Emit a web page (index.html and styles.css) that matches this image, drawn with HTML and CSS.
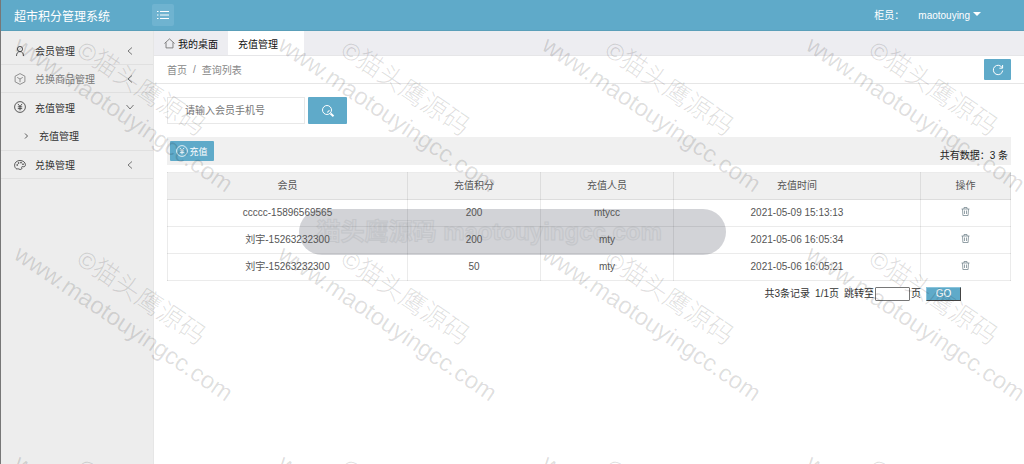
FILE: index.html
```html
<!DOCTYPE html>
<html lang="zh-CN">

<head>
    <meta charset="UTF-8">
    <meta name="viewport" content="width=device-width, initial-scale=1.0">
    <title>超市积分管理系统</title>
    <link rel="stylesheet" href="styles.css">
</head>

<body>
    <header class="header">
        <h1 class="logo">超市积分管理系统</h1>
        <button type="button" class="menu-toggle" aria-label="菜单">
            <svg width="12" height="10" viewBox="0 0 12 10">
                <path d="M0 1.5h1.5M3 1.5h9M0 5h1.5M3 5h9M0 8.5h1.5M3 8.5h9" />
            </svg>
        </button>
        <div class="user">
            <span>柜员：</span>
            <a href="#" class="user-name">maotouying<span class="caret"></span></a>
        </div>
    </header>

    <div class="layout">
        <nav class="sidebar">
            <a href="#" class="menu-item">
                <svg class="icon" viewBox="0 0 12 12"><circle cx="6" cy="4" r="2.600" /><path d="M2.500 11c0-2.800 1.300-4.400 3.500-4.400s3.500 1.600 3.500 4.400" /></svg>
                <span>会员管理</span>
                <svg class="arrow" viewBox="0 0 8 8"><path d="M6 0.5L2 4l4 3.5" /></svg>
            </a>
            <a href="#" class="menu-item muted">
                <svg class="icon" viewBox="0 0 12 12"><path d="M6 0.6l4.9 2.6v5.6L6 11.4 1.1 8.8V3.2zM3.2 4.4L6 6l2.8-1.6M6 6v3.2" /></svg>
                <span>兑换商品管理</span>
                <svg class="arrow" viewBox="0 0 8 8"><path d="M6 0.5L2 4l4 3.5" /></svg>
            </a>
            <a href="#" class="menu-item open">
                <svg class="icon" viewBox="0 0 12 12"><circle cx="6" cy="6" r="5.4" /><path d="M3.8 2.8L6 5.4l2.2-2.6M6 5.4v4M3.8 5.8h4.4M3.8 7.6h4.4" /></svg>
                <span>充值管理</span>
                <svg class="arrow" viewBox="0 0 8 8"><path d="M0.5 2L4 6l3.5-4" /></svg>
            </a>
            <a href="#" class="sub-item">
                <svg class="sub-arrow" viewBox="0 0 6 6"><path d="M2 0.5L4.5 3 2 5.5" /></svg>
                <span>充值管理</span>
            </a>
            <a href="#" class="menu-item">
                <svg class="icon" viewBox="0 0 12 12"><path d="M3 10.2C1.400 9.400 0.600 8 0.600 6.200 0.600 3.400 3 1.500 6 1.500s5.400 1.800 5.400 4.200c0 1.800-1.200 2.400-2.400 2-1-.3-1.700.2-1.300 1 .5 1-.2 1.800-1.500 1.800-1.200 0-1.500-.8-2.200-.8-.5 0-.7.400-1 .5z" /><circle cx="3.200" cy="6" r="0.500" /><circle cx="4.600" cy="4" r="0.500" /><circle cx="7" cy="3.700" r="0.500" /><circle cx="9" cy="5.200" r="0.500" /></svg>
                <span>兑换管理</span>
                <svg class="arrow" viewBox="0 0 8 8"><path d="M6 0.5L2 4l4 3.5" /></svg>
            </a>
        </nav>

        <main class="main">
            <div class="tabs">
                <a href="#" class="tab">
                    <svg class="home" viewBox="0 0 12 12"><path d="M0.5 6L6 1l5.500 5M2.200 4.800v6h7.600v-6" /></svg>
                    我的桌面
                </a>
                <a href="#" class="tab active">充值管理</a>
            </div>

            <div class="breadcrumb">
                <a href="#">首页</a>
                <span>/</span>
                <span>查询列表</span>
                <button type="button" class="btn refresh" aria-label="刷新">
                    <svg width="12" height="12" viewBox="0 0 12 12"><path d="M10.200 3.800A4.700 4.700 0 1 0 10.700 6.500M10.600 1v3.200H7.400" /></svg>
                </button>
            </div>

            <div class="content">
                <form class="search">
                    <input type="text" class="search-input" placeholder="请输入会员手机号" aria-label="会员手机号">
                    <button type="button" class="btn search-btn" aria-label="查询">
                        <svg width="14" height="14" viewBox="0 0 14 14"><circle cx="6" cy="6" r="4.500" /><path d="M8.200 6A2.200 2.200 0 0 1 6 8.200" /><path class="handle" d="M9.500 9.500l3 2.800" /></svg>
                    </button>
                </form>

                <div class="toolbar">
                    <button type="button" class="btn add-btn">
                        <svg class="icon" viewBox="0 0 12 12"><circle cx="6" cy="6" r="5.400" /><path d="M3.800 2.800L6 5.400l2.200-2.600M6 5.400v4M3.800 5.800h4.400M3.800 7.600h4.400" /></svg>
                        充值
                    </button>
                    <span class="total">共有数据：3 条</span>
                </div>

                <table class="records">
                    <thead>
                        <tr>
                            <th class="col-member">会员</th>
                            <th class="col-points">充值积分</th>
                            <th class="col-staff">充值人员</th>
                            <th class="col-time">充值时间</th>
                            <th>操作</th>
                        </tr>
                    </thead>
                    <tbody>
                        <tr>
                            <td>ccccc-15896569565</td>
                            <td>200</td>
                            <td>mtycc</td>
                            <td>2021-05-09 15:13:13</td>
                            <td><button type="button" class="delete" aria-label="删除"><svg width="9" height="9" viewBox="0 0 9 9"><path d="M0.500 2h8M3 2V0.500h3V2M1.500 2l.4 6.500h5.200L7.500 2M3.500 3.500v3.500M5.500 3.500v3.500" /></svg></button></td>
                        </tr>
                        <tr>
                            <td>刘宇-15263232300</td>
                            <td>200</td>
                            <td>mty</td>
                            <td>2021-05-06 16:05:34</td>
                            <td><button type="button" class="delete" aria-label="删除"><svg width="9" height="9" viewBox="0 0 9 9"><path d="M0.500 2h8M3 2V0.500h3V2M1.500 2l.4 6.500h5.200L7.500 2M3.500 3.500v3.500M5.500 3.500v3.500" /></svg></button></td>
                        </tr>
                        <tr>
                            <td>刘宇-15263232300</td>
                            <td>50</td>
                            <td>mty</td>
                            <td>2021-05-06 16:05:21</td>
                            <td><button type="button" class="delete" aria-label="删除"><svg width="9" height="9" viewBox="0 0 9 9"><path d="M0.500 2h8M3 2V0.500h3V2M1.500 2l.4 6.500h5.200L7.500 2M3.500 3.500v3.500M5.500 3.500v3.500" /></svg></button></td>
                        </tr>
                    </tbody>
                </table>

                <form class="paging">
                    <span>共3条记录</span>
                    <span>1/1页</span>
                    <label class="jump">跳转至<input type="text" class="page-input">页</label>
                    <button type="button" class="go">GO</button>
                </form>
            </div>
        </main>
    </div>

    <!-- watermark -->
    <div class="watermark" aria-hidden="true">
        <div class="mark"><span class="mark-name">©<b>猫头鹰源码</b></span><span>www.maotouyingcc.com</span></div>
        <div class="mark"><span class="mark-name">©<b>猫头鹰源码</b></span><span>www.maotouyingcc.com</span></div>
        <div class="mark"><span class="mark-name">©<b>猫头鹰源码</b></span><span>www.maotouyingcc.com</span></div>
        <div class="mark"><span class="mark-name">©<b>猫头鹰源码</b></span><span>www.maotouyingcc.com</span></div>
        <div class="mark"><span class="mark-name">©<b>猫头鹰源码</b></span><span>www.maotouyingcc.com</span></div>
        <div class="mark"><span class="mark-name">©<b>猫头鹰源码</b></span><span>www.maotouyingcc.com</span></div>
        <div class="mark"><span class="mark-name">©<b>猫头鹰源码</b></span><span>www.maotouyingcc.com</span></div>
        <div class="mark"><span class="mark-name">©<b>猫头鹰源码</b></span><span>www.maotouyingcc.com</span></div>
        <div class="mark"><span class="mark-name">©<b>猫头鹰源码</b></span><span>www.maotouyingcc.com</span></div>
        <div class="mark"><span class="mark-name">©<b>猫头鹰源码</b></span><span>www.maotouyingcc.com</span></div>
        <div class="mark"><span class="mark-name">©<b>猫头鹰源码</b></span><span>www.maotouyingcc.com</span></div>
        <div class="mark"><span class="mark-name">©<b>猫头鹰源码</b></span><span>www.maotouyingcc.com</span></div>
    </div>
    <div class="banner">猫头鹰源码 maotouyingcc.com</div>
</body>

</html>
```
FILE: styles.css
```css
* {
    box-sizing: border-box;
}

body {
    position: relative;
    display: flex;
    flex-direction: column;
    min-height: 100vh;
    margin: 0;
    border-left: 1px solid #777;
    font-family: "Liberation Sans", "Noto Sans CJK SC", sans-serif;
    font-size: 10px;
    color: #333;
    background-color: #fff;
}

a {
    color: inherit;
    text-decoration: none;
}

button,
input {
    font-family: inherit;
    font-size: 10px;
}

svg {
    flex: none;
    fill: none;
    stroke: currentColor;
}

/* header */
.header {
    display: flex;
    align-items: center;
    height: 31px;
    padding: 0 43px 0 13px;
    border-bottom: 1px solid #5a9fb9;
    color: #fff;
    background-color: #5faac9;
}

.logo {
    width: 138px;
    margin: 0;
    font-size: 12px;
    font-weight: normal;
}

.menu-toggle {
    display: flex;
    align-items: center;
    justify-content: center;
    width: 22px;
    height: 22px;
    padding: 0;
    border: 0;
    border-radius: 2px;
    color: #fff;
    background-color: #6fb3d0;
}

.user {
    display: flex;
    align-items: center;
    gap: 14px;
    margin-left: auto;
    line-height: 15px;
}

.user-name {
    display: flex;
    gap: 3px;
}

.caret {
    height: 4px;
    margin-top: 4px;
    border: 4px solid transparent;
    border-top-color: #fff;
    border-bottom: 0;
}

.layout {
    display: flex;
    flex: 1;
}

/* sidebar */
.sidebar {
    flex: none;
    width: 153px;
    padding-top: 6px;
    border-right: 1px solid #e6e6e6;
    background-color: #ededed;
}

.menu-item,
.sub-item {
    display: flex;
    align-items: center;
    height: 28px;
    border-bottom: 1px solid #e0e0e0;
}

.menu-item {
    gap: 9px;
    padding: 0 19px 0 13px;
}

.menu-item.muted {
    color: #777;
}

.menu-item.open {
    border-bottom: 0;
}

.sub-item {
    height: 30px;
    gap: 10px;
    padding-left: 22px;
}

.icon {
    width: 12px;
    height: 12px;
    stroke-width: 0.8;
}

.arrow {
    width: 8px;
    height: 8px;
    margin-left: auto;
    color: #777;
}

.sub-arrow {
    width: 6px;
    height: 6px;
    stroke-width: 0.8;
}

/* tabs and breadcrumb */
.main {
    flex: 1;
    min-width: 0;
}

.tabs {
    display: flex;
    height: 25px;
    border-bottom: 1px solid #e6e6e8;
    background-color: #ededf1;
}

.tab {
    display: flex;
    align-items: center;
    gap: 3px;
    padding: 0 10px;
    color: #111;
}

.tab.active {
    padding-right: 26px;
    background-color: #fff;
}

.home {
    width: 11px;
    height: 11px;
    stroke: #777;
}

.breadcrumb {
    display: flex;
    align-items: center;
    gap: 6px;
    height: 28px;
    padding: 0 13px;
    border-bottom: 1px solid #e6e6e6;
    color: #888;
}

.btn {
    display: flex;
    align-items: center;
    justify-content: center;
    padding: 0;
    border: 0;
    border-radius: 1px;
    color: #fff;
    background-color: #5faac9;
}

.refresh {
    width: 27px;
    height: 21px;
    margin-left: auto;
}

/* content */
.content {
    padding: 13px;
}

.search {
    display: flex;
    gap: 3px;
    margin-bottom: 13px;
}

.search-input {
    width: 138px;
    height: 27px;
    padding: 0 17px;
    border: 1px solid #e8e8e8;
}

.search-input::placeholder {
    color: #777;
}

.search-btn {
    width: 39px;
}

.handle {
    stroke-width: 2;
}

.toolbar {
    display: flex;
    align-items: center;
    justify-content: space-between;
    height: 28px;
    margin-bottom: 7px;
    padding: 0 3px;
    background-color: #f0f0f0;
}

.add-btn {
    gap: 1px;
    width: 44px;
    height: 20px;
    font-size: 9px;
}

.total {
    padding-top: 6px;
    color: #222;
}

/* rows stay readable above the banner */
.records {
    position: relative;
    z-index: 1;
    width: 100%;
    table-layout: fixed;
    border-collapse: collapse;
    line-height: 14px;
    color: #555;
}

.records th,
.records td {
    height: 27px;
    padding: 0;
    border: 1px solid rgba(0, 0, 0, 0.08);
    font-weight: normal;
    text-align: center;
}

.records th {
    background-color: rgba(0, 0, 0, 0.06);
}

.col-member {
    width: 240px;
}

.col-points,
.col-staff {
    width: 133px;
}

.col-time {
    width: 247px;
}

.delete {
    padding: 0;
    border: 0;
    line-height: 0;
    color: #7a8a92;
    background: none;
}

.delete svg {
    stroke-width: 0.8;
}

.paging {
    display: flex;
    align-items: center;
    justify-content: flex-end;
    gap: 5px;
    padding: 6px 50px 0 0;
    line-height: 14px;
}

.jump {
    display: flex;
    align-items: center;
    gap: 1px;
}

.page-input {
    width: 35px;
    height: 14px;
    padding: 0 2px;
    border: 1px solid #777;
    border-radius: 1px;
}

.go {
    width: 35px;
    height: 14px;
    padding: 0;
    border: 1px solid #444;
    border-top-color: #8ac4dc;
    border-left-color: #8ac4dc;
    line-height: 12px;
    color: #fff;
    background-color: #5faac9;
}

/* watermark */
.watermark {
    position: absolute;
    inset: 0;
    display: grid;
    grid-template-columns: repeat(4, 264px);
    grid-auto-rows: 209px;
    padding-left: 37px;
    overflow: hidden;
    color: rgba(0, 0, 0, 0.13);
    pointer-events: none;
}

.mark {
    display: flex;
    flex-direction: column;
    align-items: center;
    width: 270px;
    height: 62px;
    font-size: 24px;
    line-height: 31px;
    white-space: nowrap;
    transform: rotate(34deg);
    transform-origin: 0 0;
}

.mark-name {
    height: 31px;
}

.mark-name b {
    font-size: 26px;
    font-weight: 300;
}

.banner {
    position: absolute;
    top: 209px;
    left: 50%;
    width: 427px;
    margin-left: -214px;
    padding-left: 18px;
    border-radius: 23px;
    font-size: 24px;
    font-weight: bold;
    line-height: 46px;
    white-space: nowrap;
    color: #d0d1d5;
    background-color: #d2d3d7;
    -webkit-text-stroke: 1px #c4c6ca;
    pointer-events: none;
}
```
